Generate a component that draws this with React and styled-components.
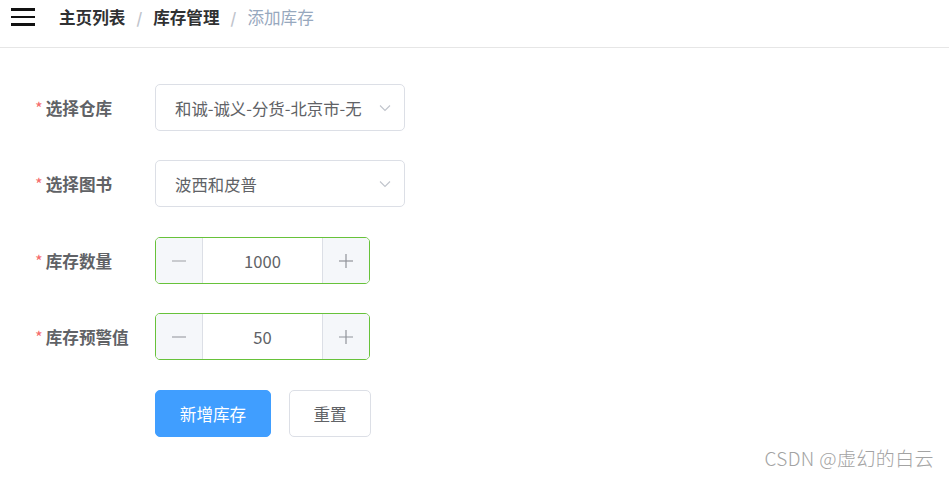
import React, { useState } from 'react';
import styled, { createGlobalStyle } from 'styled-components';

const GlobalStyle = createGlobalStyle`
	html, body {
		margin: 0;
		padding: 0;
		background: #fff;
		font-family: 'Noto Sans CJK SC', 'Noto Sans', 'Liberation Sans', sans-serif;
	}
	* {
		box-sizing: border-box;
	}
`;

const Page = styled.div`
	position: relative;
	min-height: 100vh;
	background: #fff;
`;

const Navbar = styled.div`
	height: 48px;
	border-bottom: 1px solid #e6e6e6;
`;

const NavRow = styled.div`
	display: flex;
	align-items: center;
	height: 34px;
`;

const Hamburger = styled.div`
	display: flex;
	flex-direction: column;
	gap: 5px;
	width: 24px;
	margin: 0 24px 0 11px;
	span {
		display: block;
		height: 2.5px;
		background: #111;
	}
`;

const Crumbs = styled.div`
	display: flex;
	align-items: center;
	font-size: 16.6px;
	line-height: 1;
`;

const Crumb = styled.span`
	color: ${(p) => (p.$last ? '#97a8be' : '#303133')};
	font-weight: ${(p) => (p.$last ? 400 : 700)};
`;

const Sep = styled.span`
	margin: 0 11px;
	color: #c0c4cc;
	font-weight: 700;
	font-size: 15px;
`;

const Form = styled.div`
	display: flex;
	flex-direction: column;
	gap: 29px;
	padding: 36px 35px;
`;

const Row = styled.div`
	display: flex;
	align-items: center;
	height: 47px;
	margin-top: ${(p) => (p.$nudge ? '1px' : '0')};
`;

const Label = styled.div`
	width: 120px;
	flex-shrink: 0;
	font-size: 16.6px;
	font-weight: 700;
	color: #606266;
	white-space: nowrap;
	&::before {
		content: ${(p) => (p.$required ? "'*'" : "''")};
		color: #f56c6c;
		font-weight: 400;
		margin-right: 3px;
	}
`;

const SelectBox = styled.div`
	position: relative;
	display: flex;
	align-items: center;
	width: 250px;
	height: 47px;
	padding: 0 35px 0 19px;
	border: 1px solid #dcdfe6;
	border-radius: 5px;
	font-size: 16.4px;
	color: #606266;
	white-space: nowrap;
`;

const Chevron = styled.svg`
	position: absolute;
	right: 13px;
	top: 19px;
`;

const NumberBox = styled.div`
	display: flex;
	width: 215px;
	height: 47px;
	border: 1px solid #67c23a;
	border-radius: 5px;
	overflow: hidden;
`;

const StepBtn = styled.div`
	display: flex;
	align-items: center;
	justify-content: center;
	width: 47px;
	flex-shrink: 0;
	background: #f5f7fa;
	border-left: ${(p) => (p.$side === 'right' ? '1px solid #dcdfe6' : 'none')};
	border-right: ${(p) => (p.$side === 'left' ? '1px solid #dcdfe6' : 'none')};
	cursor: pointer;
`;

const NumValue = styled.div`
	flex: 1;
	display: flex;
	align-items: center;
	justify-content: center;
	font-size: 16.6px;
	color: #606266;
`;

const Buttons = styled.div`
	display: flex;
	gap: 18px;
	margin-left: 120px;
`;

const Button = styled.button`
	display: flex;
	align-items: center;
	justify-content: center;
	height: 47px;
	width: ${(p) => (p.$primary ? '116px' : '82px')};
	padding: 0;
	border-radius: 5px;
	border: 1px solid ${(p) => (p.$primary ? '#409eff' : '#dcdfe6')};
	background: ${(p) => (p.$primary ? '#409eff' : '#fff')};
	color: ${(p) => (p.$primary ? '#fff' : '#606266')};
	font-family: inherit;
	font-size: 16.6px;
	white-space: nowrap;
	cursor: pointer;
`;

const Watermark = styled.div`
	position: absolute;
	right: 15px;
	bottom: 8px;
	font-size: 19px;
	font-weight: 300;
	color: #a3a3a3;
	letter-spacing: 0.4px;
`;

const ChevronIcon = () => (
	<Chevron width='12' height='8' viewBox='0 0 12 8'>
		<polyline points='1,1.5 6,6.5 11,1.5' fill='none' stroke='#c0c4cc' strokeWidth='1.1' />
	</Chevron>
);

const Minus = () => (
	<svg width='14' height='14' viewBox='0 0 14 14'>
		<line x1='0' y1='7' x2='14' y2='7' stroke='#b1b3b8' strokeWidth='1.3' />
	</svg>
);

const Plus = () => (
	<svg width='14' height='14' viewBox='0 0 14 14'>
		<line x1='0' y1='7' x2='14' y2='7' stroke='#909399' strokeWidth='1.2' />
		<line x1='7' y1='0' x2='7' y2='14' stroke='#909399' strokeWidth='1.2' />
	</svg>
);

const NumberInput = ({ value, onChange }) => (
	<NumberBox>
		<StepBtn $side='left' onClick={() => onChange(value - 1)}>
			<Minus />
		</StepBtn>
		<NumValue>{value}</NumValue>
		<StepBtn $side='right' onClick={() => onChange(value + 1)}>
			<Plus />
		</StepBtn>
	</NumberBox>
);

const App = () => {
	const [stock, setStock] = useState(1000);
	const [warn, setWarn] = useState(50);

	return (
		<Page>
			<GlobalStyle />
			<Navbar>
				<NavRow>
					<Hamburger>
						<span />
						<span />
						<span />
					</Hamburger>
					<Crumbs>
						<Crumb>主页列表</Crumb>
						<Sep>/</Sep>
						<Crumb>库存管理</Crumb>
						<Sep>/</Sep>
						<Crumb $last>添加库存</Crumb>
					</Crumbs>
				</NavRow>
			</Navbar>
			<Form>
				<Row>
					<Label $required>选择仓库</Label>
					<SelectBox>
						和诚-诚义-分货-北京市-无
						<ChevronIcon />
					</SelectBox>
				</Row>
				<Row>
					<Label $required>选择图书</Label>
					<SelectBox>
						波西和皮普
						<ChevronIcon />
					</SelectBox>
				</Row>
				<Row $nudge>
					<Label $required>库存数量</Label>
					<NumberInput value={stock} onChange={setStock} />
				</Row>
				<Row>
					<Label $required>库存预警值</Label>
					<NumberInput value={warn} onChange={setWarn} />
				</Row>
				<Row $nudge>
					<Buttons>
						<Button $primary>新增库存</Button>
						<Button>重置</Button>
					</Buttons>
				</Row>
			</Form>
			<Watermark>CSDN @虚幻的白云</Watermark>
		</Page>
	);
};

export default App;
